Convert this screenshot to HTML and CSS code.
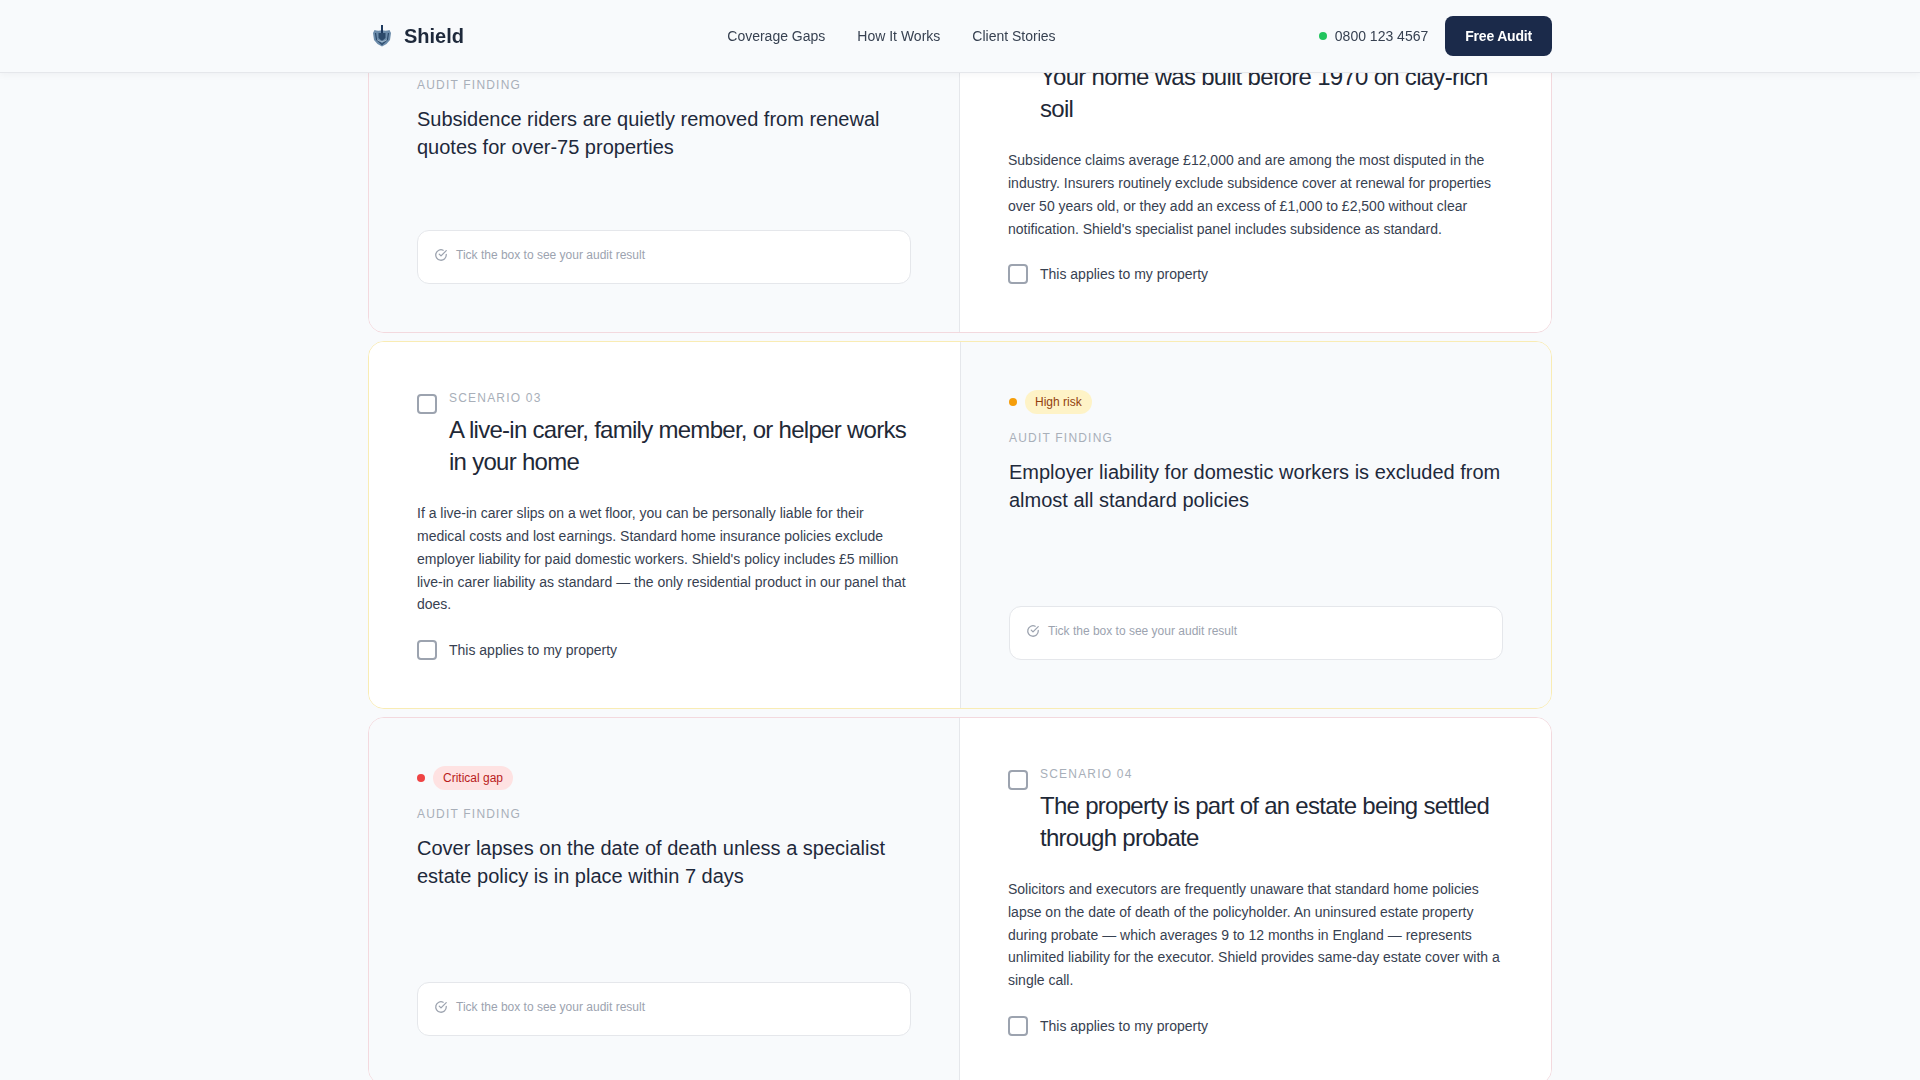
FILE: index.html
```html
<!DOCTYPE html>
<html lang="en">
<head>
    <meta charset="UTF-8">
    <title>Shield - Free Audit</title>
    <link rel="stylesheet" href="styles.css">
</head>
<body>
    <header class="site-header">
        <div class="header-inner">
            <a class="logo" href="#">
                <svg class="logo-mark" width="20" height="24" viewBox="0 0 20 24">
                    <path d="M10 6c2 1 5 1 7.500 0l1.500 3-1 7-3.500 4-4.500 2.500L5.500 20 2 16 1 9l1.500-3C5 7 8 7 10 6z" fill="#6c8cab"/>
                    <path d="M3.500 9l1 6.500L10 20.500l5.500-5L16.500 9" fill="none" stroke="#2c4a6b" stroke-width="1.200"/>
                    <path d="M9 1h2v15H9z" fill="#1e3a5f"/>
                    <path d="M6.500 9h7v5l-3.500 3-3.500-3z" fill="#2c4a6b"/>
                    <path d="M5 15.500c2 2.500 8 2.500 10 0" fill="none" stroke="#b8cbdc" stroke-width="0.800"/>
                </svg>
                <span>Shield</span>
            </a>
            <nav class="nav">
                <a href="#">Coverage Gaps</a>
                <a href="#">How It Works</a>
                <a href="#">Client Stories</a>
            </nav>
            <div class="header-right">
                <span class="phone"><i class="dot dot-green"></i>0800 123 4567</span>
                <a class="button" href="#">Free Audit</a>
            </div>
        </div>
    </header>

    <main class="scenarios">
        <article class="scenario scenario-critical">
            <div class="panel panel-finding">
                <div class="risk"><i class="dot dot-red"></i><span class="badge badge-red">Critical gap</span></div>
                <p class="label">AUDIT FINDING</p>
                <h3 class="finding-title">Subsidence riders are quietly removed from renewal quotes for over-75 properties</h3>
                <div class="result">
                    <svg width="14" height="14" viewBox="0 0 24 24" fill="none" stroke="#9ca3af" stroke-width="2.200" stroke-linecap="round" stroke-linejoin="round"><path d="M21 11.100V12a9 9 0 1 1-5.300-8.200"/><path d="M21 4.500 12 13.500l-3-3"/></svg>
                    <span>Tick the box to see your audit result</span>
                </div>
            </div>
            <div class="panel panel-question">
                <div class="question-head">
                    <span class="box"></span>
                    <div>
                        <p class="label label-scenario">SCENARIO 02</p>
                        <h2 class="question-title">Your home was built before 1970 on clay-rich soil</h2>
                    </div>
                </div>
                <p class="body-text">Subsidence claims average £12,000 and are among the most disputed in the industry. Insurers routinely exclude subsidence cover at renewal for properties over 50 years old, or they add an excess of £1,000 to £2,500 without clear notification. Shield's specialist panel includes subsidence as standard.</p>
                <label class="applies"><span class="box"></span>This applies to my property</label>
            </div>
        </article>

        <article class="scenario scenario-high">
            <div class="panel panel-question">
                <div class="question-head">
                    <span class="box"></span>
                    <div>
                        <p class="label label-scenario">SCENARIO 03</p>
                        <h2 class="question-title">A live-in carer, family member, or helper works in your home</h2>
                    </div>
                </div>
                <p class="body-text">If a live-in carer slips on a wet floor, you can be personally liable for their medical costs and lost earnings. Standard home insurance policies exclude employer liability for paid domestic workers. Shield's policy includes £5 million live-in carer liability as standard — the only residential product in our panel that does.</p>
                <label class="applies"><span class="box"></span>This applies to my property</label>
            </div>
            <div class="panel panel-finding">
                <div class="risk"><i class="dot dot-amber"></i><span class="badge badge-amber">High risk</span></div>
                <p class="label">AUDIT FINDING</p>
                <h3 class="finding-title">Employer liability for domestic workers is excluded from almost all standard policies</h3>
                <div class="result">
                    <svg width="14" height="14" viewBox="0 0 24 24" fill="none" stroke="#9ca3af" stroke-width="2.200" stroke-linecap="round" stroke-linejoin="round"><path d="M21 11.100V12a9 9 0 1 1-5.300-8.200"/><path d="M21 4.500 12 13.500l-3-3"/></svg>
                    <span>Tick the box to see your audit result</span>
                </div>
            </div>
        </article>

        <article class="scenario scenario-critical">
            <div class="panel panel-finding">
                <div class="risk"><i class="dot dot-red"></i><span class="badge badge-red">Critical gap</span></div>
                <p class="label">AUDIT FINDING</p>
                <h3 class="finding-title">Cover lapses on the date of death unless a specialist estate policy is in place within 7 days</h3>
                <div class="result">
                    <svg width="14" height="14" viewBox="0 0 24 24" fill="none" stroke="#9ca3af" stroke-width="2.200" stroke-linecap="round" stroke-linejoin="round"><path d="M21 11.100V12a9 9 0 1 1-5.300-8.200"/><path d="M21 4.500 12 13.500l-3-3"/></svg>
                    <span>Tick the box to see your audit result</span>
                </div>
            </div>
            <div class="panel panel-question">
                <div class="question-head">
                    <span class="box"></span>
                    <div>
                        <p class="label label-scenario">SCENARIO 04</p>
                        <h2 class="question-title">The property is part of an estate being settled through probate</h2>
                    </div>
                </div>
                <p class="body-text">Solicitors and executors are frequently unaware that standard home policies lapse on the date of death of the policyholder. An uninsured estate property during probate — which averages 9 to 12 months in England — represents unlimited liability for the executor. Shield provides same-day estate cover with a single call.</p>
                <label class="applies"><span class="box"></span>This applies to my property</label>
            </div>
        </article>
    </main>
</body>
</html>
```

FILE: styles.css
```css
html, body {
    height: 100%;
}
body {
    margin: 0;
    overflow: hidden;
    background-color: #f8fafc;
    font-family: "Liberation Sans", Arial, sans-serif;
    color: #374151;
}
a {
    text-decoration: none;
    color: inherit;
}
p, h2, h3 {
    margin: 0;
}

/* header */
.site-header {
    position: fixed;
    top: 0;
    left: 0;
    right: 0;
    z-index: 10;
    height: 73px;
    background-color: #f8fafc;
    border-bottom: 1px solid #e5e7eb;
    box-shadow: 0 1px 8px rgba(15, 23, 42, 0.05);
    box-sizing: border-box;
}
.header-inner {
    width: 1184px;
    height: 100%;
    margin: 0 auto;
    display: flex;
    align-items: center;
    justify-content: space-between;
}
.logo {
    display: flex;
    align-items: center;
    gap: 12px;
    font-size: 20px;
    font-weight: 700;
    color: #1e293b;
    margin-left: 4px;
}
.nav {
    display: flex;
    gap: 32px;
    font-size: 14px;
    color: #374151;
}
.header-right {
    display: flex;
    align-items: center;
    gap: 17px;
}
.phone {
    display: flex;
    align-items: center;
    gap: 8px;
    font-size: 14px;
    color: #374151;
}
.button {
    display: flex;
    align-items: center;
    height: 40px;
    padding: 0 20px;
    border-radius: 8px;
    background-color: #1b2a4a;
    color: #fff;
    font-size: 14px;
    letter-spacing: -0.2px;
    font-weight: 700;
}
.dot {
    display: block;
    width: 8px;
    height: 8px;
    border-radius: 50%;
    flex: none;
}
.dot-green { background-color: #22c55e; }
.dot-red { background-color: #ef4444; }
.dot-amber { background-color: #f59e0b; }

/* cards */
.scenarios {
    width: 1184px;
    margin: -12px auto 0;
    display: flex;
    flex-direction: column;
    gap: 8px;
}
.scenario {
    display: grid;
    grid-template-columns: 1fr 1fr;
    border-radius: 16px;
    border: 1px solid #f3d9de;
    overflow: hidden;
    background-color: #fff;
}
.scenario-high {
    grid-template-columns: calc(50% + 1px) calc(50% - 1px);
    border-color: #f9ecb4;
}
.panel {
    padding: 48px;
    display: flex;
    flex-direction: column;
    min-width: 0;
}
.panel-finding {
    background-color: #f8fafc;
}
.panel-question {
    background-color: #fff;
}
.scenario > .panel:first-child {
    border-right: 1px solid #e5e7eb;
}
.risk {
    display: flex;
    align-items: center;
    gap: 8px;
    margin-bottom: 16px;
}
.badge {
    padding: 4px 10px;
    border-radius: 999px;
    font-size: 12px;
    line-height: 16px;
}
.badge-red {
    background-color: #fee2e2;
    color: #b91c1c;
}
.badge-amber {
    background-color: #fef3c7;
    color: #92400e;
}
.label {
    font-size: 12px;
    line-height: 16px;
    letter-spacing: 1.2px;
    color: #a8afb9;
}
.finding-title {
    margin-top: 12px;
    font-size: 20px;
    line-height: 28px;
    font-weight: 400;
    color: #1e293b;
}
.result {
    margin-top: auto;
    display: flex;
    align-items: center;
    gap: 8px;
    height: 54px;
    padding: 0 16px 4px;
    box-sizing: border-box;
    background-color: #fff;
    border: 1px solid #e5e7eb;
    border-radius: 12px;
    font-size: 12px;
    color: #9ca3af;
}
.question-head {
    display: flex;
    gap: 12px;
}
.box {
    display: block;
    flex: none;
    width: 20px;
    height: 20px;
    margin-top: 4px;
    box-sizing: border-box;
    border: 2px solid #9ca3af;
    border-radius: 4px;
    background-color: #fff;
}
.question-title {
    margin-top: 8px;
    font-size: 24px;
    line-height: 32px;
    font-weight: 400;
    letter-spacing: -0.72px;
    color: #1f2937;
}
.body-text {
    margin-top: 24.25px;
    font-size: 14px;
    line-height: 22.75px;
    color: #374151;
}
.applies {
    margin-top: 23.75px;
    display: flex;
    align-items: center;
    gap: 12px;
    font-size: 14px;
    color: #374151;
}
.applies .box {
    margin-top: 0;
}
```
